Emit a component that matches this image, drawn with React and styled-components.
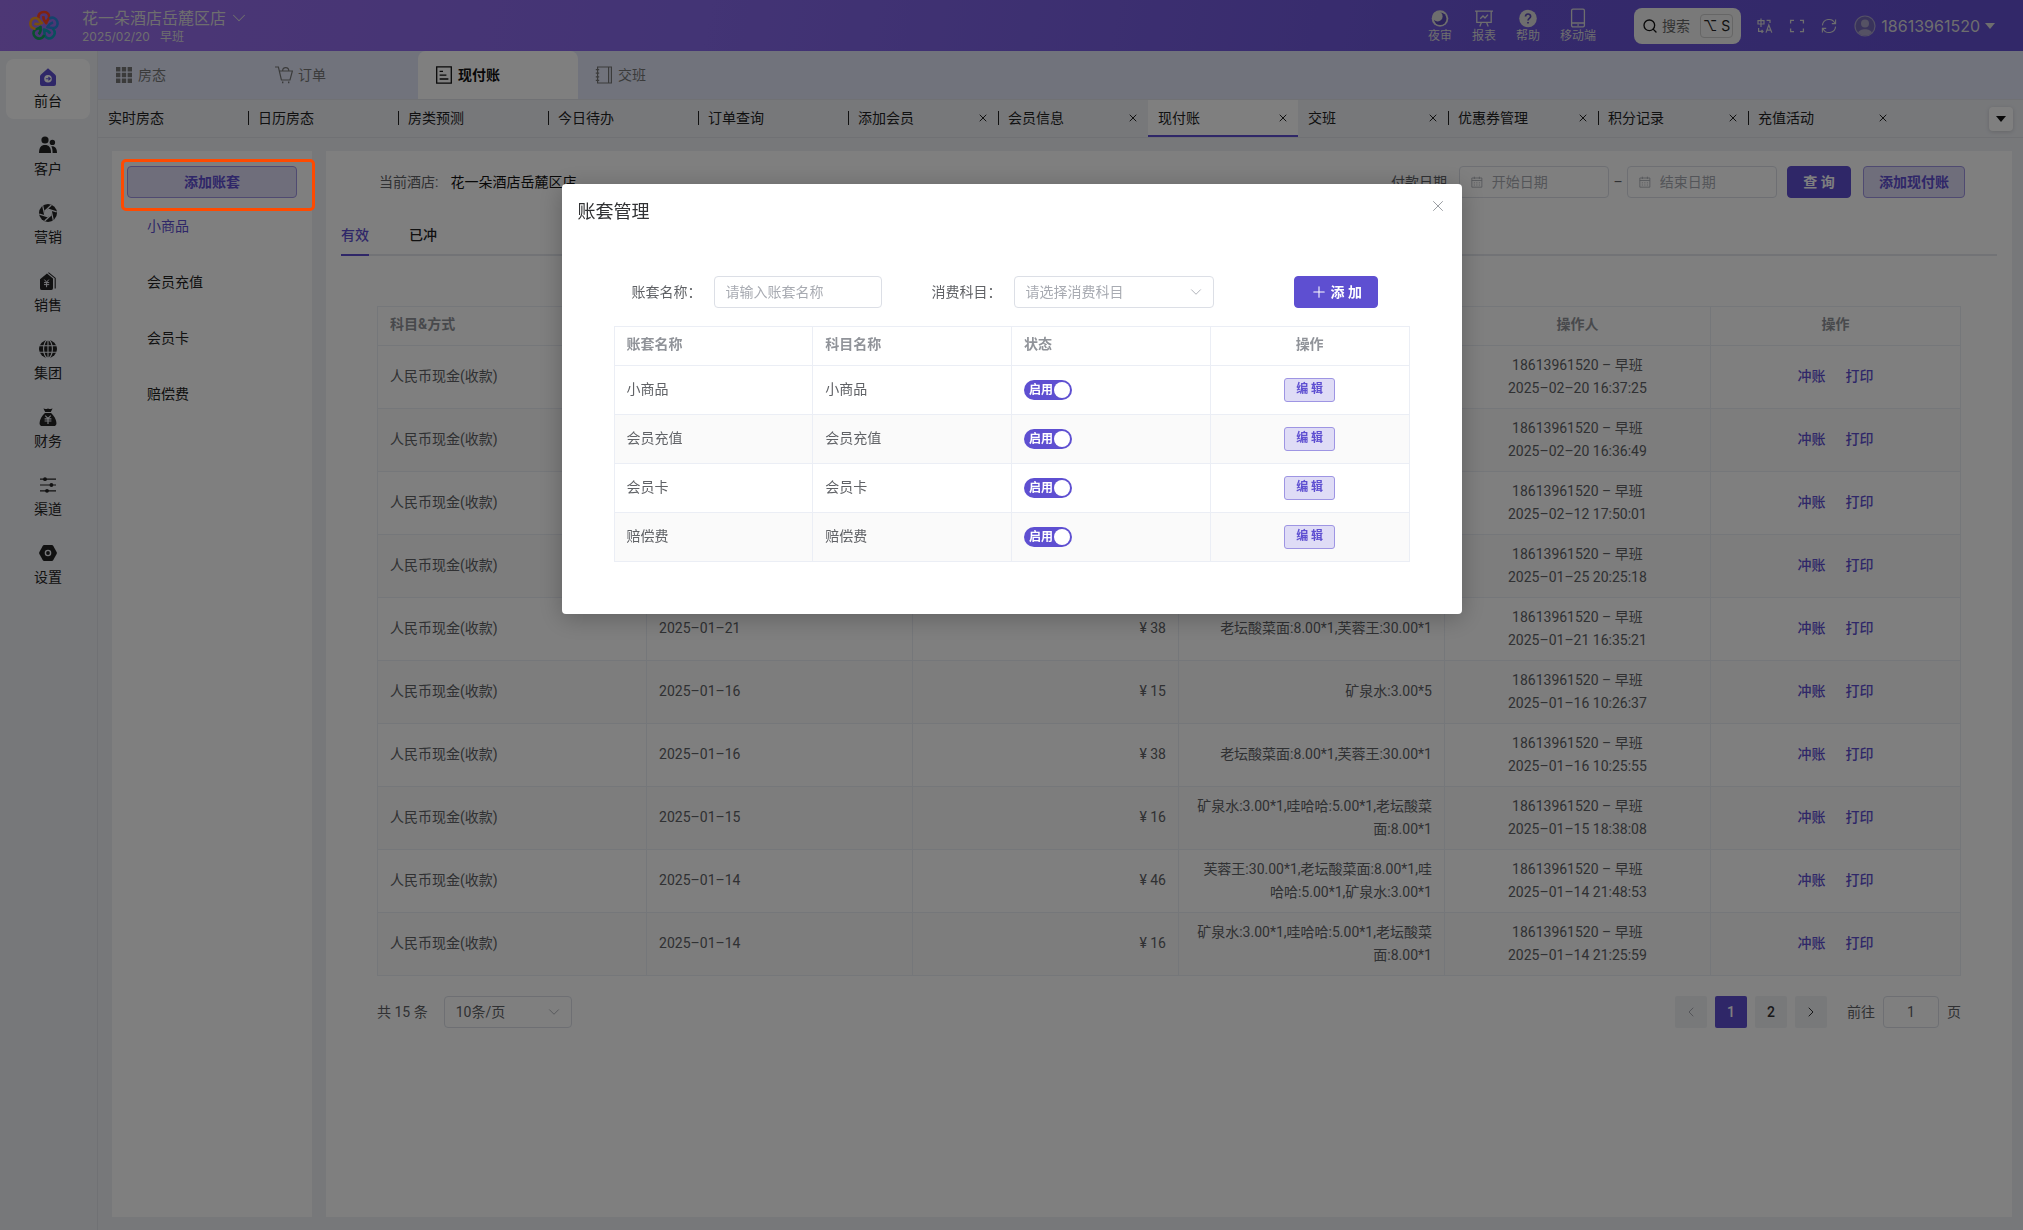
import { useState } from "react";
import styled, { createGlobalStyle, ThemeProvider } from "styled-components";
import { ChevronDown, ChevronLeft, ChevronRight, Plus, Search, X } from "lucide-react";

const theme = {
  primary: "#5e4fd1",
  primaryLight: "#dfdcf6",
  primaryBorder: "#9e95e3",
  text: "#606266",
  dark: "#222222",
  muted: "#909399",
  placeholder: "#a8abb2",
  border: "#dcdfe6",
  line: "#ebeef5",
  page: "#eef0f5",
};

const sideMenu = ["前台", "客户", "营销", "销售", "集团", "财务", "渠道", "设置"];

const quickLinks = ["夜审", "报表", "帮助", "移动端"];

const mainTabs = ["房态", "订单", "现付账", "交班"];

const pageTabs = [
  { name: "实时房态" },
  { name: "日历房态", divider: true },
  { name: "房类预测", divider: true },
  { name: "今日待办", divider: true },
  { name: "订单查询", divider: true },
  { name: "添加会员", divider: true, close: true },
  { name: "会员信息", divider: true, close: true },
  { name: "现付账", close: true, active: true },
  { name: "交班", close: true },
  { name: "优惠券管理", divider: true, close: true },
  { name: "积分记录", divider: true, close: true },
  { name: "充值活动", divider: true, close: true },
];

const accounts = ["小商品", "会员充值", "会员卡", "赔偿费"];

const records = [
  { time: "2025–02–20 16:37:25" },
  { time: "2025–02–20 16:36:49" },
  { time: "2025–02–12 17:50:01" },
  { time: "2025–01–25 20:25:18" },
  { date: "2025–01–21", price: "¥ 38", detail: "老坛酸菜面:8.00*1,芙蓉王:30.00*1", time: "2025–01–21 16:35:21" },
  { date: "2025–01–16", price: "¥ 15", detail: "矿泉水:3.00*5", time: "2025–01–16 10:26:37" },
  { date: "2025–01–16", price: "¥ 38", detail: "老坛酸菜面:8.00*1,芙蓉王:30.00*1", time: "2025–01–16 10:25:55" },
  { date: "2025–01–15", price: "¥ 16", detail: "矿泉水:3.00*1,哇哈哈:5.00*1,老坛酸菜面:8.00*1", time: "2025–01–15 18:38:08" },
  { date: "2025–01–14", price: "¥ 46", detail: "芙蓉王:30.00*1,老坛酸菜面:8.00*1,哇哈哈:5.00*1,矿泉水:3.00*1", time: "2025–01–14 21:48:53" },
  { date: "2025–01–14", price: "¥ 16", detail: "矿泉水:3.00*1,哇哈哈:5.00*1,老坛酸菜面:8.00*1", time: "2025–01–14 21:25:59" },
];

const petals = ["#ff4422", "#2a86d8", "#129fb8", "#12a05c", "#f09a24"];

const Logo = () => (
  <svg width="32" height="32" viewBox="-16 -16 32 32" fill="none" strokeWidth="2.6" strokeLinejoin="round">
    {petals.map((color, i) => (
      <path
        key={color}
        transform={`rotate(${i * 72})`}
        stroke={color}
        d="M-5.4 -7.2C-6.4 -11.8 -3.4 -14 0 -14C3.6 -14 5.8 -11.2 4.9 -8.2C4.3 -6.2 2.8 -5.4 2.2 -2.8C0.6 -4.6 -1 -6.2 -0.6 -9.8"
      />
    ))}
  </svg>
);

const SideIcon = ({ name }) => {
  const hole = name === "前台" ? "#fff" : "#eef0f5";
  return (
    <svg width="18" height="18" viewBox="0 0 18 18" fill="currentColor">
      {name === "前台" && (
        <>
          <path d="M9 0.3L16 6.4Q17 7.2 17 8.4V16Q17 18 15 18H3Q1 18 1 16V8.4Q1 7.2 2 6.4Z" />
          <circle cx="9" cy="10.7" r="3.8" fill={hole} />
          <path d="M6.8 10.7H11M9.4 9l1.8 1.7-1.8 1.7" fill="none" stroke="currentColor" strokeWidth="1.1" />
        </>
      )}
      {name === "客户" && (
        <>
          <circle cx="6" cy="4" r="3.6" />
          <path d="M0 17C0 11.5 2 9 6 9S12 11.5 12 17Z" />
          <circle cx="13.4" cy="6.4" r="2.7" />
          <path d="M12.3 10.3C16 9.9 18 12.3 18 17H13.6C13.6 14 13.2 12 12.3 10.3Z" />
        </>
      )}
      {name === "营销" && (
        <>
          <circle cx="9" cy="9" r="9" />
          <circle cx="9" cy="9" r="3.8" fill={hole} />
          {[0, 60, 120, 180, 240, 300].map((a) => (
            <path key={a} transform={`rotate(${a} 9 9)`} d="M5.6 7.2L12.4 1" stroke={hole} strokeWidth="1.2" />
          ))}
        </>
      )}
      {name === "销售" && (
        <>
          <path d="M8 1.4L14 6.4V16Q14 18 12.4 18H2.6Q1 18 1 16V7.2Z" />
          <path d="M9.4 0.6L16.2 6.2V16.6" fill="none" stroke="currentColor" strokeWidth="1.1" />
          <path d="M5.4 7.6L7.6 10.2 9.8 7.6M5 10.6H10.2M5 12.6H10.2M7.6 10.2V15.2" fill="none" stroke={hole} />
        </>
      )}
      {name === "集团" && (
        <>
          <circle cx="9" cy="9" r="9" />
          <path d="M0 5.8H18M0 12.2H18M9 0V18" fill="none" stroke={hole} strokeWidth="1.1" />
          <ellipse cx="9" cy="9" rx="4.4" ry="9" fill="none" stroke={hole} strokeWidth="1.1" />
        </>
      )}
      {name === "财务" && (
        <>
          <path d="M4.4 0.6Q6.6 1.6 9 0.4Q11.4 1.6 13.6 0.6L11.8 4H6.2Z" />
          <path d="M6 5H12C15 7.6 17.4 12 17.4 15.2Q17.4 18 14.8 18H3.2Q0.6 18 0.6 15.2C0.6 12 3 7.6 6 5Z" />
          <path d="M6.2 7.6L9 10.4 11.8 7.6M5.6 10.8H12.4M5.6 13H12.4M9 10.4V16" fill="none" stroke={hole} strokeWidth="1.2" />
        </>
      )}
      {name === "渠道" && (
        <>
          <path d="M1 3.2H17M1 9H17M1 14.8H17" stroke="currentColor" strokeWidth="1.2" />
          <circle cx="6" cy="3.2" r="1.9" />
          <circle cx="12.4" cy="9" r="1.9" />
          <circle cx="8" cy="14.8" r="1.9" />
        </>
      )}
      {name === "设置" && (
        <>
          <path d="M5.2 1H12.8Q13.8 1 14.3 1.9L17.6 7.9Q18.2 9 17.6 10.1L14.3 16.1Q13.8 17 12.8 17H5.2Q4.2 17 3.7 16.1L0.4 10.1Q-0.2 9 0.4 7.9L3.7 1.9Q4.2 1 5.2 1Z" />
          <circle cx="9" cy="9" r="2.6" fill="none" stroke={hole} strokeWidth="1.4" />
        </>
      )}
    </svg>
  );
};

const TabIcon = ({ name }) => (
  <svg width="18" height="18" viewBox="0 0 18 18" fill="none" stroke="currentColor" strokeWidth="1.2">
    {name === "房态" && (
      <path
        stroke="none"
        fill="currentColor"
        d="M1 1h4.4v4.4H1zM6.8 1h4.4v4.4H6.8zM12.6 1H17v4.4h-4.4zM1 6.8h4.4v4.4H1zM6.8 6.8h4.4v4.4H6.8zM12.6 6.8H17v4.4h-4.4zM1 12.6h4.4V17H1zM6.8 12.6h4.4V17H6.8zM12.6 12.6H17V17h-4.4z"
      />
    )}
    {name === "订单" && (
      <>
        <path d="M0 1H3.4L6.4 14H15L17.4 5H4.4M7.6 5C7.6 0.6 13.8 0.6 13.8 5" />
        <path d="M7 16.4H8.4M13 16.4H14.4" strokeWidth="1.6" />
      </>
    )}
    {name === "现付账" && (
      <>
        <path d="M1.7 0.8H16.3V17.2H1.7Z" strokeWidth="1.3" />
        <path d="M4.6 5.4H8M4.6 9.2H11.4M4.6 13H13.4" strokeWidth="1.3" />
      </>
    )}
    {name === "交班" && (
      <path d="M2.6 1H16.4V17H2.6ZM13.6 1V17M0.8 3.6H4.2M0.8 7.2H4.2M0.8 10.8H4.2M0.8 14.4H4.2" />
    )}
  </svg>
);

const QuickIcon = ({ name }) => (
  <svg width="18" height="20" viewBox="0 0 18 20" fill="none" stroke="currentColor" strokeWidth="1.3">
    {name === "夜审" && (
      <>
        <circle cx="9" cy="10.5" r="8.3" fill="currentColor" stroke="none" />
        <circle cx="9.2" cy="10.7" r="6.3" fill="#5847b8" stroke="none" />
        <circle cx="6.6" cy="8.4" r="5" fill="currentColor" stroke="none" />
      </>
    )}
    {name === "报表" && (
      <path d="M0 3.2H18M1.8 3.2V14.4H16.2V3.2M5.2 10.8L8 8L10 10L13 6.6M6.4 14.4L4.8 18.6M11.6 14.4L13.2 18.6" />
    )}
    {name === "帮助" && (
      <>
        <circle cx="9" cy="10.5" r="8.8" fill="currentColor" stroke="none" />
        <path d="M6.5 8.6C6.5 5.2 11.6 5.2 11.6 8.4C11.6 10.4 9 10.4 9 12.6M9 14V15.6" stroke="#5847b8" strokeWidth="1.7" />
      </>
    )}
    {name === "移动端" && <path d="M4 1.2H14Q15.4 1.2 15.4 2.6V17.4Q15.4 18.8 14 18.8H4Q2.6 18.8 2.6 17.4V2.6Q2.6 1.2 4 1.2ZM2.6 15H15.4M8.4 17H9.8" />}
  </svg>
);

const CalendarIcon = () => (
  <svg width="14" height="14" viewBox="0 0 14 14" fill="none" stroke="currentColor">
    <path d="M1 2.2H13V13.2H1ZM1 5.2H13M4 0.6V3.4M10 0.6V3.4" />
    <path d="M3.4 8H4.6M6.4 8H7.6M9.4 8H10.6M3.4 10.6H4.6M6.4 10.6H7.6M9.4 10.6H10.6" />
  </svg>
);

const App = () => {
  const [enabled, setEnabled] = useState([true, true, true, true]);

  const toggleAccount = (index) => {
    setEnabled(enabled.map((value, i) => (i === index ? !value : value)));
  };

  return (
    <ThemeProvider theme={theme}>
      <GlobalStyle />
      <Page>
        <Header>
          <Brand>
            <Logo />
            <div>
              <HotelButton type="button">
                花一朵酒店岳麓区店
                <ChevronDown size={22} strokeWidth={1.1} />
              </HotelButton>
              <Shift>
                <span>2025/02/20</span>
                <span>早班</span>
              </Shift>
            </div>
          </Brand>
          <HeaderTools>
            <QuickNav>
              {quickLinks.map((name) => (
                <QuickLink key={name} href="#">
                  <QuickIcon name={name} />
                  {name}
                </QuickLink>
              ))}
            </QuickNav>
            <SearchButton type="button">
              <Search size={16} color="#111" />
              搜索
              <Kbd>⌥ S</Kbd>
            </SearchButton>
            <IconGroup>
              <IconButton type="button" aria-label="语言">
                <svg width="16" height="16" viewBox="0 0 16 16" fill="none" stroke="currentColor" strokeWidth="1.2">
                  <path d="M1 2.6H7V6H1ZM4 0.6V9M9 14.6L11.8 7L14.8 14.6M10 12.2H13.8M9.6 2.4H13V5M1.6 10V13.4H6M4.6 12L6 13.4L4.6 14.8" />
                </svg>
              </IconButton>
              <IconButton type="button" aria-label="全屏">
                <svg width="16" height="16" viewBox="0 0 16 16" fill="none" stroke="currentColor" strokeWidth="1.3">
                  <path d="M1.6 5.6V2.4H5M11 2.4H14.4V5.6M14.4 10.4V13.6H11M5 13.6H1.6V10.4" />
                </svg>
              </IconButton>
              <IconButton type="button" aria-label="刷新">
                <svg width="16" height="16" viewBox="0 0 16 16" fill="none" stroke="currentColor" strokeWidth="1.1">
                  <path d="M1.4 7.4A6.6 6.6 0 0 1 14 5.4M14.6 1.6V5.6H10.8M14.6 8.6A6.6 6.6 0 0 1 2 10.6M1.4 14.4V10.4H5.2" />
                </svg>
              </IconButton>
            </IconGroup>
            <UserButton type="button">
              <svg width="22" height="22" viewBox="0 0 22 22">
                <circle cx="11" cy="11" r="10" fill="#7266b6" stroke="#a9a2cc" strokeWidth="1.2" />
                <circle cx="11" cy="8.6" r="4" fill="#aaa4c8" />
                <path d="M4.2 17.8C5 13 17 13 17.8 17.8A9.6 9.6 0 0 1 4.2 17.8Z" fill="#aaa4c8" />
              </svg>
              18613961520
              <Caret />
            </UserButton>
          </HeaderTools>
        </Header>

        <Body>
          <SideNav>
            {sideMenu.map((name, i) => (
              <SideLink key={name} href="#" $active={i === 0}>
                <SideIcon name={name} />
                <span>{name}</span>
              </SideLink>
            ))}
          </SideNav>

          <Main>
            <MainTabs>
              {mainTabs.map((name) => (
                <MainTab key={name} type="button" $active={name === "现付账"}>
                  <TabIcon name={name} />
                  {name}
                </MainTab>
              ))}
            </MainTabs>
            <PageTabs>
              {pageTabs.map((tab) => (
                <PageTab key={tab.name} $active={tab.active} $divider={tab.divider}>
                  <a href="#">{tab.name}</a>
                  {tab.close && (
                    <TabClose type="button" aria-label="关闭">
                      <X size={12} strokeWidth={2} />
                    </TabClose>
                  )}
                </PageTab>
              ))}
              <MoreButton type="button" aria-label="更多">
                <Caret />
              </MoreButton>
            </PageTabs>

            <Content>
              <AccountPanel>
                <Highlight>
                  <Button $plain $block type="button">
                    添加账套
                  </Button>
                </Highlight>
                {accounts.map((name, i) => (
                  <AccountLink key={name} href="#" $active={i === 0}>
                    {name}
                  </AccountLink>
                ))}
              </AccountPanel>

              <Panel>
                <Filters>
                  <Hotel>
                    <span>当前酒店:</span>
                    <strong>花一朵酒店岳麓区店</strong>
                  </Hotel>
                  <DateRange>
                    <label htmlFor="start">付款日期</label>
                    <DateField>
                      <CalendarIcon />
                      <input id="start" placeholder="开始日期" />
                    </DateField>
                    <Dash>–</Dash>
                    <DateField>
                      <CalendarIcon />
                      <input aria-label="结束日期" placeholder="结束日期" />
                    </DateField>
                  </DateRange>
                  <ButtonGroup>
                    <Button type="button">查 询</Button>
                    <Button $plain type="button">
                      添加现付账
                    </Button>
                  </ButtonGroup>
                </Filters>

                <StatusTabs>
                  <StatusTab type="button" $active>
                    有效
                  </StatusTab>
                  <StatusTab type="button">已冲</StatusTab>
                </StatusTabs>

                <TableArea>
                  <Table>
                    <colgroup>
                      <col style={{ width: "17%" }} />
                      <col span="4" style={{ width: "16.8%" }} />
                      <col />
                    </colgroup>
                    <thead>
                      <tr>
                        <Th>科目&amp;方式</Th>
                        <Th />
                        <Th />
                        <Th />
                        <Th $align="center">操作人</Th>
                        <Th $align="center">操作</Th>
                      </tr>
                    </thead>
                    <tbody>
                      {records.map((row) => (
                        <Row key={row.time} $height="63px">
                          <Td>人民币现金(收款)</Td>
                          <Td>{row.date}</Td>
                          <Td $align="right">{row.price}</Td>
                          <Td $align="right">{row.detail}</Td>
                          <Td $align="center">
                            18613961520 – 早班
                            <br />
                            {row.time}
                          </Td>
                          <Td $align="center">
                            <Actions>
                              <a href="#">冲账</a>
                              <a href="#">打印</a>
                            </Actions>
                          </Td>
                        </Row>
                      ))}
                    </tbody>
                  </Table>

                  <Pagination>
                    <span>共 15 条</span>
                    <SelectBox $width="128px">
                      <select aria-label="每页条数">
                        <option>10条/页</option>
                      </select>
                      <ChevronDown size={18} strokeWidth={1.2} />
                    </SelectBox>
                    <Pager>
                      <PageButton type="button" aria-label="上一页" disabled>
                        <ChevronLeft size={16} strokeWidth={1.5} />
                      </PageButton>
                      <PageButton type="button" $active>
                        1
                      </PageButton>
                      <PageButton type="button">2</PageButton>
                      <PageButton type="button" aria-label="下一页">
                        <ChevronRight size={16} strokeWidth={1.5} />
                      </PageButton>
                    </Pager>
                    <Jump>
                      前往
                      <input defaultValue="1" />页
                    </Jump>
                  </Pagination>
                </TableArea>
              </Panel>
            </Content>
          </Main>
        </Body>
      </Page>

      <Overlay>
        <Dialog role="dialog" aria-labelledby="dialog-title">
          <DialogHeader>
            <h2 id="dialog-title">账套管理</h2>
            <CloseButton type="button" aria-label="关闭">
              <X size={18} strokeWidth={1.2} />
            </CloseButton>
          </DialogHeader>
          <DialogBody>
            <DialogForm>
              <Field>
                <label htmlFor="account">账套名称：</label>
                <TextInput id="account" placeholder="请输入账套名称" />
              </Field>
              <Field>
                <label htmlFor="subject">消费科目：</label>
                <SelectBox $width="200px" $empty>
                  <select id="subject">
                    <option>请选择消费科目</option>
                  </select>
                  <ChevronDown size={18} strokeWidth={1.2} />
                </SelectBox>
              </Field>
              <AddButton type="button">
                <Plus size={18} strokeWidth={1.4} />添 加
              </AddButton>
            </DialogForm>
            <Table>
              <thead>
                <tr>
                  <Th>账套名称</Th>
                  <Th>科目名称</Th>
                  <Th>状态</Th>
                  <Th $align="center">操作</Th>
                </tr>
              </thead>
              <tbody>
                {accounts.map((name, i) => (
                  <Row key={name} $height="49px">
                    <Td>{name}</Td>
                    <Td>{name}</Td>
                    <Td>
                      <Switch>
                        <input
                          type="checkbox"
                          role="switch"
                          aria-label="启用"
                          checked={enabled[i]}
                          onChange={() => toggleAccount(i)}
                        />
                        <span>启用</span>
                      </Switch>
                    </Td>
                    <Td $align="center">
                      <Button $plain $small type="button">
                        编 辑
                      </Button>
                    </Td>
                  </Row>
                ))}
              </tbody>
            </Table>
          </DialogBody>
        </Dialog>
      </Overlay>
    </ThemeProvider>
  );
};

const GlobalStyle = createGlobalStyle`
  * {
    box-sizing: border-box;
  }
  body {
    margin: 0;
    font-family: Roboto, "Noto Sans CJK SC", sans-serif;
    font-size: 14px;
    line-height: 20px;
    color: ${(p) => p.theme.text};
    background: ${(p) => p.theme.page};
  }
  button, input, select {
    font: inherit;
    color: inherit;
  }
  button {
    border: none;
    background: none;
    padding: 0;
    cursor: pointer;
  }
  a {
    color: inherit;
    text-decoration: none;
  }
  input::placeholder {
    color: ${(p) => p.theme.placeholder};
    opacity: 1;
  }
`;

const Page = styled.div`
  min-height: 100vh;
  display: flex;
  flex-direction: column;
`;

const Header = styled.header`
  height: 51px;
  padding: 0 28px;
  display: flex;
  justify-content: space-between;
  align-items: center;
  font-family: Inter, "Noto Sans CJK SC", sans-serif;
  color: #dcdcdc;
  background: linear-gradient(100deg, #9a6eea 0%, #8668ea 35%, #6a54d8 75%, #6450d2 100%);
`;

const Brand = styled.div`
  display: flex;
  align-items: center;
  gap: 22px;
`;

const HotelButton = styled.button`
  display: flex;
  align-items: center;
  gap: 2px;
  font-size: 16px;
  line-height: 20px;
`;

const Shift = styled.div`
  display: flex;
  gap: 10px;
  font-size: 12px;
  line-height: 16px;
`;

const HeaderTools = styled.div`
  display: flex;
  align-items: center;
`;

const QuickNav = styled.nav`
  display: flex;
  gap: 20px;
  margin-right: 38px;
`;

const QuickLink = styled.a`
  display: flex;
  flex-direction: column;
  align-items: center;
  font-size: 12px;
  line-height: 16px;
`;

const SearchButton = styled.button`
  height: 36px;
  padding: 0 8px;
  display: flex;
  align-items: center;
  gap: 4px;
  color: #666;
  border-radius: 8px;
  background: #f2f2f2;
`;

const Kbd = styled.kbd`
  height: 24px;
  margin-left: 6px;
  padding: 0 2px;
  border: 1px solid #ccc;
  border-radius: 4px;
  color: #222;
  font: 14px/22px Inter, "DejaVu Sans", sans-serif;
`;

const IconGroup = styled.div`
  display: flex;
  gap: 16px;
  margin: 0 17px 0 16px;
`;

const IconButton = styled.button`
  display: flex;
`;

const UserButton = styled.button`
  display: flex;
  align-items: center;
  gap: 5px;
  font-size: 16px;
`;

const Caret = styled.i`
  border: 5px solid transparent;
  border-top: 6px solid currentColor;
  border-bottom: 0;
`;

const Body = styled.div`
  flex: 1;
  display: flex;
`;

const SideNav = styled.nav`
  width: 98px;
  padding: 8px 7px 8px 6px;
  display: flex;
  flex-direction: column;
  gap: 8px;
  border-right: 1px solid #e0e2e8;
`;

const SideLink = styled.a`
  height: 60px;
  padding-top: 9px;
  display: flex;
  flex-direction: column;
  align-items: center;
  gap: 5px;
  border-radius: 8px;
  color: ${(p) => p.theme.dark};
  background: ${(p) => (p.$active ? "#fff" : "transparent")};

  svg {
    color: ${(p) => (p.$active ? p.theme.primary : p.theme.dark)};
  }
`;

const Main = styled.main`
  flex: 1;
  min-width: 0;
  display: flex;
  flex-direction: column;
`;

const MainTabs = styled.div`
  height: 48px;
  display: flex;
  background: #e2e7f9;
`;

const MainTab = styled.button`
  width: 160px;
  padding: 0 0 1px 17px;
  display: flex;
  align-items: center;
  gap: 5px;
  border-radius: 8px 8px 0 0;
  font-weight: ${(p) => (p.$active ? 700 : 400)};
  color: ${(p) => (p.$active ? "#111" : "#777")};
  background: ${(p) => (p.$active ? "#fff" : "transparent")};
`;

const PageTabs = styled.div`
  height: 39px;
  padding-right: 10px;
  display: flex;
  align-items: center;
  border-top: 1px solid #e0e2e8;
  border-bottom: 1px solid #e0e2e8;
`;

const PageTab = styled.div`
  width: 150px;
  height: 100%;
  padding: 0 9px 0 10px;
  display: flex;
  align-items: center;
  justify-content: space-between;
  color: ${(p) => p.theme.dark};
  background: ${(p) => (p.$active ? "#fff" : "transparent")};
  border-bottom: 2px solid ${(p) => (p.$active ? p.theme.primary : "transparent")};

  a {
    flex: 1;
  }

  &::before {
    content: "";
    display: ${(p) => (p.$divider ? "block" : "none")};
    width: 1px;
    height: 14px;
    margin: 0 9px 0 -10px;
    background: #222;
  }
`;

const TabClose = styled.button`
  display: flex;
`;

const MoreButton = styled.button`
  width: 24px;
  height: 24px;
  margin-left: auto;
  display: flex;
  align-items: center;
  justify-content: center;
  border-radius: 4px;
  color: #111;
  background: #fff;
  box-shadow: 0 1px 4px rgba(0, 0, 0, 0.15);
`;

const Content = styled.div`
  flex: 1;
  display: flex;
  gap: 14px;
  padding: 13px 11px 13px 14px;
`;

const AccountPanel = styled.aside`
  width: 200px;
  padding: 15px;
  background: #fff;
`;

const Highlight = styled.div`
  position: relative;

  /* guide frame stays above the mask */
  &::after {
    content: "";
    position: absolute;
    z-index: 20;
    top: -7px;
    right: -18px;
    bottom: -13px;
    left: -6px;
    border: 3px solid #ff4a00;
    border-radius: 5px;
    pointer-events: none;
  }
`;

const AccountLink = styled.a`
  display: block;
  padding-left: 20px;
  line-height: 56px;
  color: ${(p) => (p.$active ? p.theme.primary : p.theme.dark)};
`;

const Button = styled.button`
  display: inline-flex;
  align-items: center;
  justify-content: center;
  width: ${(p) => (p.$block ? "100%" : "auto")};
  min-width: ${(p) => (p.$small ? "51px" : "64px")};
  height: ${(p) => (p.$small ? "24px" : "32px")};
  padding: 0 ${(p) => (p.$small ? "11px" : "15px")} 1px;
  border: 1px solid ${(p) => (p.$plain ? p.theme.primaryBorder : p.theme.primary)};
  border-radius: ${(p) => (p.$small ? "3px" : "4px")};
  font-size: ${(p) => (p.$small ? "12px" : "14px")};
  font-weight: 700;
  white-space: pre;
  vertical-align: middle;
  color: ${(p) => (p.$plain ? p.theme.primary : "#fff")};
  background: ${(p) => (p.$plain ? p.theme.primaryLight : p.theme.primary)};
`;

const ButtonGroup = styled.div`
  display: flex;
  gap: 12px;
`;

const AddButton = styled(Button)`
  gap: 3px;
  margin-left: 80px;
`;

const Panel = styled.section`
  flex: 1;
  min-width: 0;
  background: #fff;
`;

const Filters = styled.div`
  padding: 15px 47px 0 53px;
  display: flex;
  align-items: center;
  gap: 10px;
`;

const Hotel = styled.div`
  flex: 1;
  display: flex;
  gap: 12px;

  strong {
    font-weight: 400;
    color: #111;
  }
`;

const DateRange = styled.div`
  display: flex;
  align-items: center;

  label {
    margin-right: 12px;
  }
`;

const DateField = styled.span`
  width: 150px;
  height: 32px;
  padding: 0 11px;
  display: flex;
  align-items: center;
  gap: 9px;
  border: 1px solid ${(p) => p.theme.border};
  border-radius: 4px;
  color: ${(p) => p.theme.placeholder};

  input {
    width: 100%;
    min-width: 0;
    padding: 0;
    border: none;
    outline: none;
    background: none;
  }
`;

const Dash = styled.span`
  width: 18px;
  text-align: center;
`;

const StatusTabs = styled.div`
  height: 40px;
  margin: 18px 15px 50px;
  display: flex;
  gap: 40px;
  box-shadow: inset 0 -2px 0 #e4e7ed;
`;

const StatusTab = styled.button`
  height: 40px;
  font-weight: 500;
  color: ${(p) => (p.$active ? p.theme.primary : p.theme.dark)};
  border-bottom: 2px solid ${(p) => (p.$active ? p.theme.primary : "transparent")};
`;

const TableArea = styled.div`
  padding: 0 51px;
`;

const Table = styled.table`
  width: 100%;
  table-layout: fixed;
  border-collapse: separate;
  border-spacing: 0;
  border-top: 1px solid ${(p) => p.theme.line};
  border-left: 1px solid ${(p) => p.theme.line};
`;

const Th = styled.th`
  height: 39px;
  padding: 0 12px 3px;
  line-height: 23px;
  text-align: ${(p) => p.$align || "left"};
  font-weight: 700;
  color: ${(p) => p.theme.muted};
  border-right: 1px solid ${(p) => p.theme.line};
  border-bottom: 1px solid ${(p) => p.theme.line};
`;

const Row = styled.tr`
  height: ${(p) => p.$height};

  &:nth-child(even) {
    background: #fafafa;
  }
`;

const Td = styled.td`
  padding: 0 12px 1px;
  line-height: 23px;
  text-align: ${(p) => p.$align || "left"};
  border-right: 1px solid ${(p) => p.theme.line};
  border-bottom: 1px solid ${(p) => p.theme.line};
`;

const Actions = styled.div`
  display: flex;
  justify-content: center;
  gap: 20px;
  font-weight: 500;
  color: ${(p) => p.theme.primary};
`;

const Pagination = styled.div`
  margin-top: 20px;
  display: flex;
  align-items: center;
  gap: 16px;
`;

const SelectBox = styled.div`
  position: relative;
  width: ${(p) => p.$width};
  color: ${(p) => (p.$empty ? p.theme.placeholder : p.theme.text)};

  select {
    display: block;
    width: 100%;
    height: 32px;
    padding: 0 11px;
    appearance: none;
    border: 1px solid ${(p) => p.theme.border};
    border-radius: 4px;
    background: #fff;
  }

  svg {
    position: absolute;
    top: 7px;
    right: 9px;
    color: ${(p) => p.theme.placeholder};
    pointer-events: none;
  }
`;

const Pager = styled.div`
  display: flex;
  gap: 8px;
  margin-left: auto;
`;

const PageButton = styled.button`
  width: 32px;
  height: 32px;
  display: flex;
  align-items: center;
  justify-content: center;
  border-radius: 2px;
  font-weight: 500;
  color: ${(p) => (p.$active ? "#fff" : "#303133")};
  background: ${(p) => (p.$active ? p.theme.primary : "#f0f2f5")};

  &:disabled {
    color: ${(p) => p.theme.placeholder};
  }
`;

const Jump = styled.label`
  display: flex;
  align-items: center;
  gap: 8px;
  margin-left: 4px;

  input {
    width: 56px;
    height: 32px;
    text-align: center;
    border: 1px solid ${(p) => p.theme.border};
    border-radius: 4px;
  }
`;

const Overlay = styled.div`
  position: fixed;
  inset: 0;
  z-index: 10;
  padding-top: 184px;
  display: flex;
  justify-content: center;
  align-items: flex-start;
  background: rgba(0, 0, 0, 0.5);
`;

const Dialog = styled.div`
  width: 900px;
  padding-bottom: 52px;
  border-radius: 4px;
  background: #fff;
  box-shadow: 0 4px 24px rgba(0, 0, 0, 0.25);
`;

const DialogHeader = styled.div`
  height: 56px;
  padding: 0 15px 0 16px;
  display: flex;
  justify-content: space-between;

  h2 {
    margin: 0;
    font-size: 18px;
    font-weight: 400;
    line-height: 56px;
    color: #303133;
  }
`;

const CloseButton = styled.button`
  height: 44px;
  display: flex;
  align-items: center;
  color: ${(p) => p.theme.muted};
`;

const DialogBody = styled.div`
  padding: 36px 52px 0;
`;

const DialogForm = styled.div`
  margin-bottom: 18px;
  padding-left: 18px;
  display: flex;
  align-items: center;
`;

const Field = styled.div`
  display: flex;
  align-items: center;
  gap: 12px;

  & + & {
    margin-left: 50px;
  }
`;

const TextInput = styled.input`
  width: 168px;
  height: 32px;
  padding: 0 11px;
  border: 1px solid ${(p) => p.theme.border};
  border-radius: 4px;
`;

const Switch = styled.label`
  width: 48px;
  height: 20px;
  padding: 0 2px 0 5px;
  display: flex;
  align-items: center;
  justify-content: space-between;
  border-radius: 10px;
  font-size: 12px;
  font-weight: 700;
  line-height: 18px;
  color: #fff;
  background: ${(p) => p.theme.primary};
  cursor: pointer;

  input {
    order: 1;
    appearance: none;
    width: 16px;
    height: 16px;
    margin: 0;
    border-radius: 50%;
    background: #fff;
  }

  &:has(input:not(:checked)) {
    background: ${(p) => p.theme.border};
  }
`;

export default App;
